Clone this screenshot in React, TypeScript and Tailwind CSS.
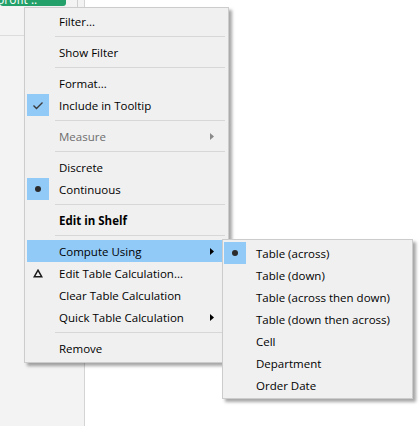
import React from "react";

type Mark = "check" | "dot" | "delta" | undefined;

interface ItemProps {
  label: string;
  mark?: Mark;
  sub?: boolean;
  active?: boolean;
  disabled?: boolean;
  bold?: boolean;
}

function MarkIcon({ mark }: { mark: Mark }) {
  if (mark === "check")
    return (
      <svg width="12" height="9" viewBox="0 0 12 9">
        <path d="M1.5 4.5 L4.5 7.5 L10.5 1.5" fill="none" stroke="#3a3a3a" strokeWidth="1.4" />
      </svg>
    );
  if (mark === "dot") return <div className="w-[6px] h-[6px] rounded-full bg-[#2b2b2b]" />;
  if (mark === "delta")
    return (
      <svg width="10" height="9" viewBox="0 0 10 9">
        <path d="M5 1.2 L8.8 7.8 L1.2 7.8 Z" fill="none" stroke="#1a1a1a" strokeWidth="1.5" strokeLinejoin="miter" />
      </svg>
    );
  return null;
}

function Item({ label, mark, sub, active, disabled, bold }: ItemProps) {
  const boxed = mark === "check" || mark === "dot";
  return (
    <div className={`flex h-[22px] items-center ${active ? "bg-[#91c9f7]" : ""}`}>
      <div className={`flex w-[22px] h-[22px] shrink-0 items-center justify-center ${boxed ? "bg-[#91c9f7]" : ""}`}>
        <MarkIcon mark={mark} />
      </div>
      <span
        className={`ml-[10px] pt-[1px] flex-1 whitespace-nowrap ${disabled ? "text-[#6d6d6d]" : "text-black"} ${bold ? "font-bold" : ""}`}
      >
        {label}
      </span>
      {sub && (
        <svg width="4" height="7" viewBox="0 0 4 7" className="mr-[12px]">
          <path d="M0 0 L4 3.5 L0 7 Z" fill={disabled ? "#8a8a8a" : "#000"} />
        </svg>
      )}
    </div>
  );
}

function Sep() {
  return <div className="mt-[4px] mb-[4px] ml-[28px] mr-[1px] h-px bg-[#d7d7d7]" />;
}

export default function App() {
  return (
    <div className="relative w-[420px] h-[426px] overflow-hidden bg-white font-['Open_Sans',sans-serif] text-[11.5px]">
      {/* background: field list panel and pill shelf */}
      <div className="flex h-full">
        <div className="w-[85px] h-full bg-[#f3f3f3] border-r border-[#d4d4d4]">
          <div className="flex h-[36px] border-b border-[#dcdcdc]">
            <div className="-mt-[10px] flex h-[16px] w-[66px] items-end gap-[6px] rounded-[3px] bg-[#24a06a] text-[12px] leading-none text-white">
              <span className="-ml-[3px] whitespace-nowrap">profit ..</span>
              <span className="text-[8px] pb-[5px]">▼</span>
            </div>
            <div className="ml-[11px] h-full border-l border-[#cfcfcf]" />
          </div>
        </div>
        <div className="flex-1" />
      </div>

      {/* main context menu */}
      <div className="absolute left-[24px] top-[7px] w-[205px] border border-[#cccccc] bg-[#f0f0f0] px-[2px] pt-[2px] pb-[3px] shadow-[3px_3px_3px_rgba(0,0,0,0.35)]">
        <Item label="Filter..." />
        <Sep />
        <Item label="Show Filter" />
        <Sep />
        <Item label="Format..." />
        <Item label="Include in Tooltip" mark="check" />
        <Sep />
        <Item label="Measure" sub disabled />
        <Sep />
        <Item label="Discrete" />
        <Item label="Continuous" mark="dot" />
        <Sep />
        <Item label="Edit in Shelf" bold />
        <Sep />
        <Item label="Compute Using" sub active />
        <Item label="Edit Table Calculation..." mark="delta" />
        <Item label="Clear Table Calculation" />
        <Item label="Quick Table Calculation" sub />
        <Sep />
        <Item label="Remove" />
      </div>

      {/* Compute Using submenu */}
      <div className="absolute left-[222px] top-[239px] w-[191px] border border-[#cccccc] bg-[#f0f0f0] px-[1px] py-[2px] shadow-[3px_3px_3px_rgba(0,0,0,0.35)]">
        <Item label="Table (across)" mark="dot" />
        <Item label="Table (down)" />
        <Item label="Table (across then down)" />
        <Item label="Table (down then across)" />
        <Item label="Cell" />
        <Item label="Department" />
        <Item label="Order Date" />
      </div>
    </div>
  );
}
